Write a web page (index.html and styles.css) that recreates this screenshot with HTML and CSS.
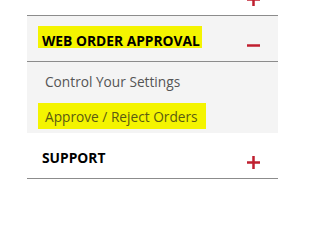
FILE: index.html
```html
<!DOCTYPE html>
<html>
<head>
<meta charset="utf-8">
<link rel="stylesheet" href="styles.css">
</head>
<body>
<div class="panel">
  <div class="row">
    <span class="title">BILLING</span>
    <svg class="icon" viewBox="0 0 13 13"><rect x="0" y="5.25" width="13" height="2.5"/><rect x="5.25" y="0" width="2.5" height="13"/></svg>
  </div>
  <div class="row open">
    <span class="title hl">WEB ORDER APPROVAL</span>
    <svg class="icon" viewBox="0 0 13 13"><rect x="0" y="5.25" width="13" height="2.5"/></svg>
  </div>
  <div class="sub">
    <a class="item">Control Your Settings</a>
    <a class="item"><span class="hl-item">Approve / Reject Orders</span></a>
  </div>
  <div class="row">
    <span class="title">SUPPORT</span>
    <svg class="icon" viewBox="0 0 13 13"><rect x="0" y="5.25" width="13" height="2.5"/><rect x="5.25" y="0" width="2.5" height="13"/></svg>
  </div>
</div>
</body>
</html>
```
FILE: styles.css
```css
html, body {
  margin: 0;
  padding: 0;
  background: #ffffff;
  overflow: hidden;
}
body {
  font-family: "Open Sans", "Liberation Sans", sans-serif;
}
.panel {
  margin: -30px 0 0 27px;
  width: 251px;
}
.row {
  display: flex;
  justify-content: space-between;
  align-items: flex-start;
  box-sizing: border-box;
  height: 46px;
  padding: 10px 18px 0 11px;
  border-bottom: 1px solid #8c8c8c;
  background: #ffffff;
}
.row.open {
  background: #f4f4f4;
}
.title {
  display: flex;
  align-items: flex-end;
  box-sizing: border-box;
  height: 22px;
  padding: 0 2px 0 4px;
  font-size: 13.8px;
  line-height: 14px;
  font-weight: 700;
  color: #000000;
}
.title.hl {
  background: #f4f400;
}
.icon {
  width: 13px;
  height: 13px;
  margin-top: 13px;
  fill: #c01f2f;
}
.sub {
  background: #f4f4f4;
  padding: 2px 0 0 11px;
  height: 71px;
  box-sizing: border-box;
}
.item {
  display: block;
  font-size: 13.7px;
  line-height: 35px;
  color: #555555;
  padding-left: 7px;
}
.hl-item {
  display: inline-block;
  line-height: 18px;
  padding: 5px 8px 3px 7px;
  margin-left: -7px;
  background: #f4f400;
  color: #5a5a12;
}
```
